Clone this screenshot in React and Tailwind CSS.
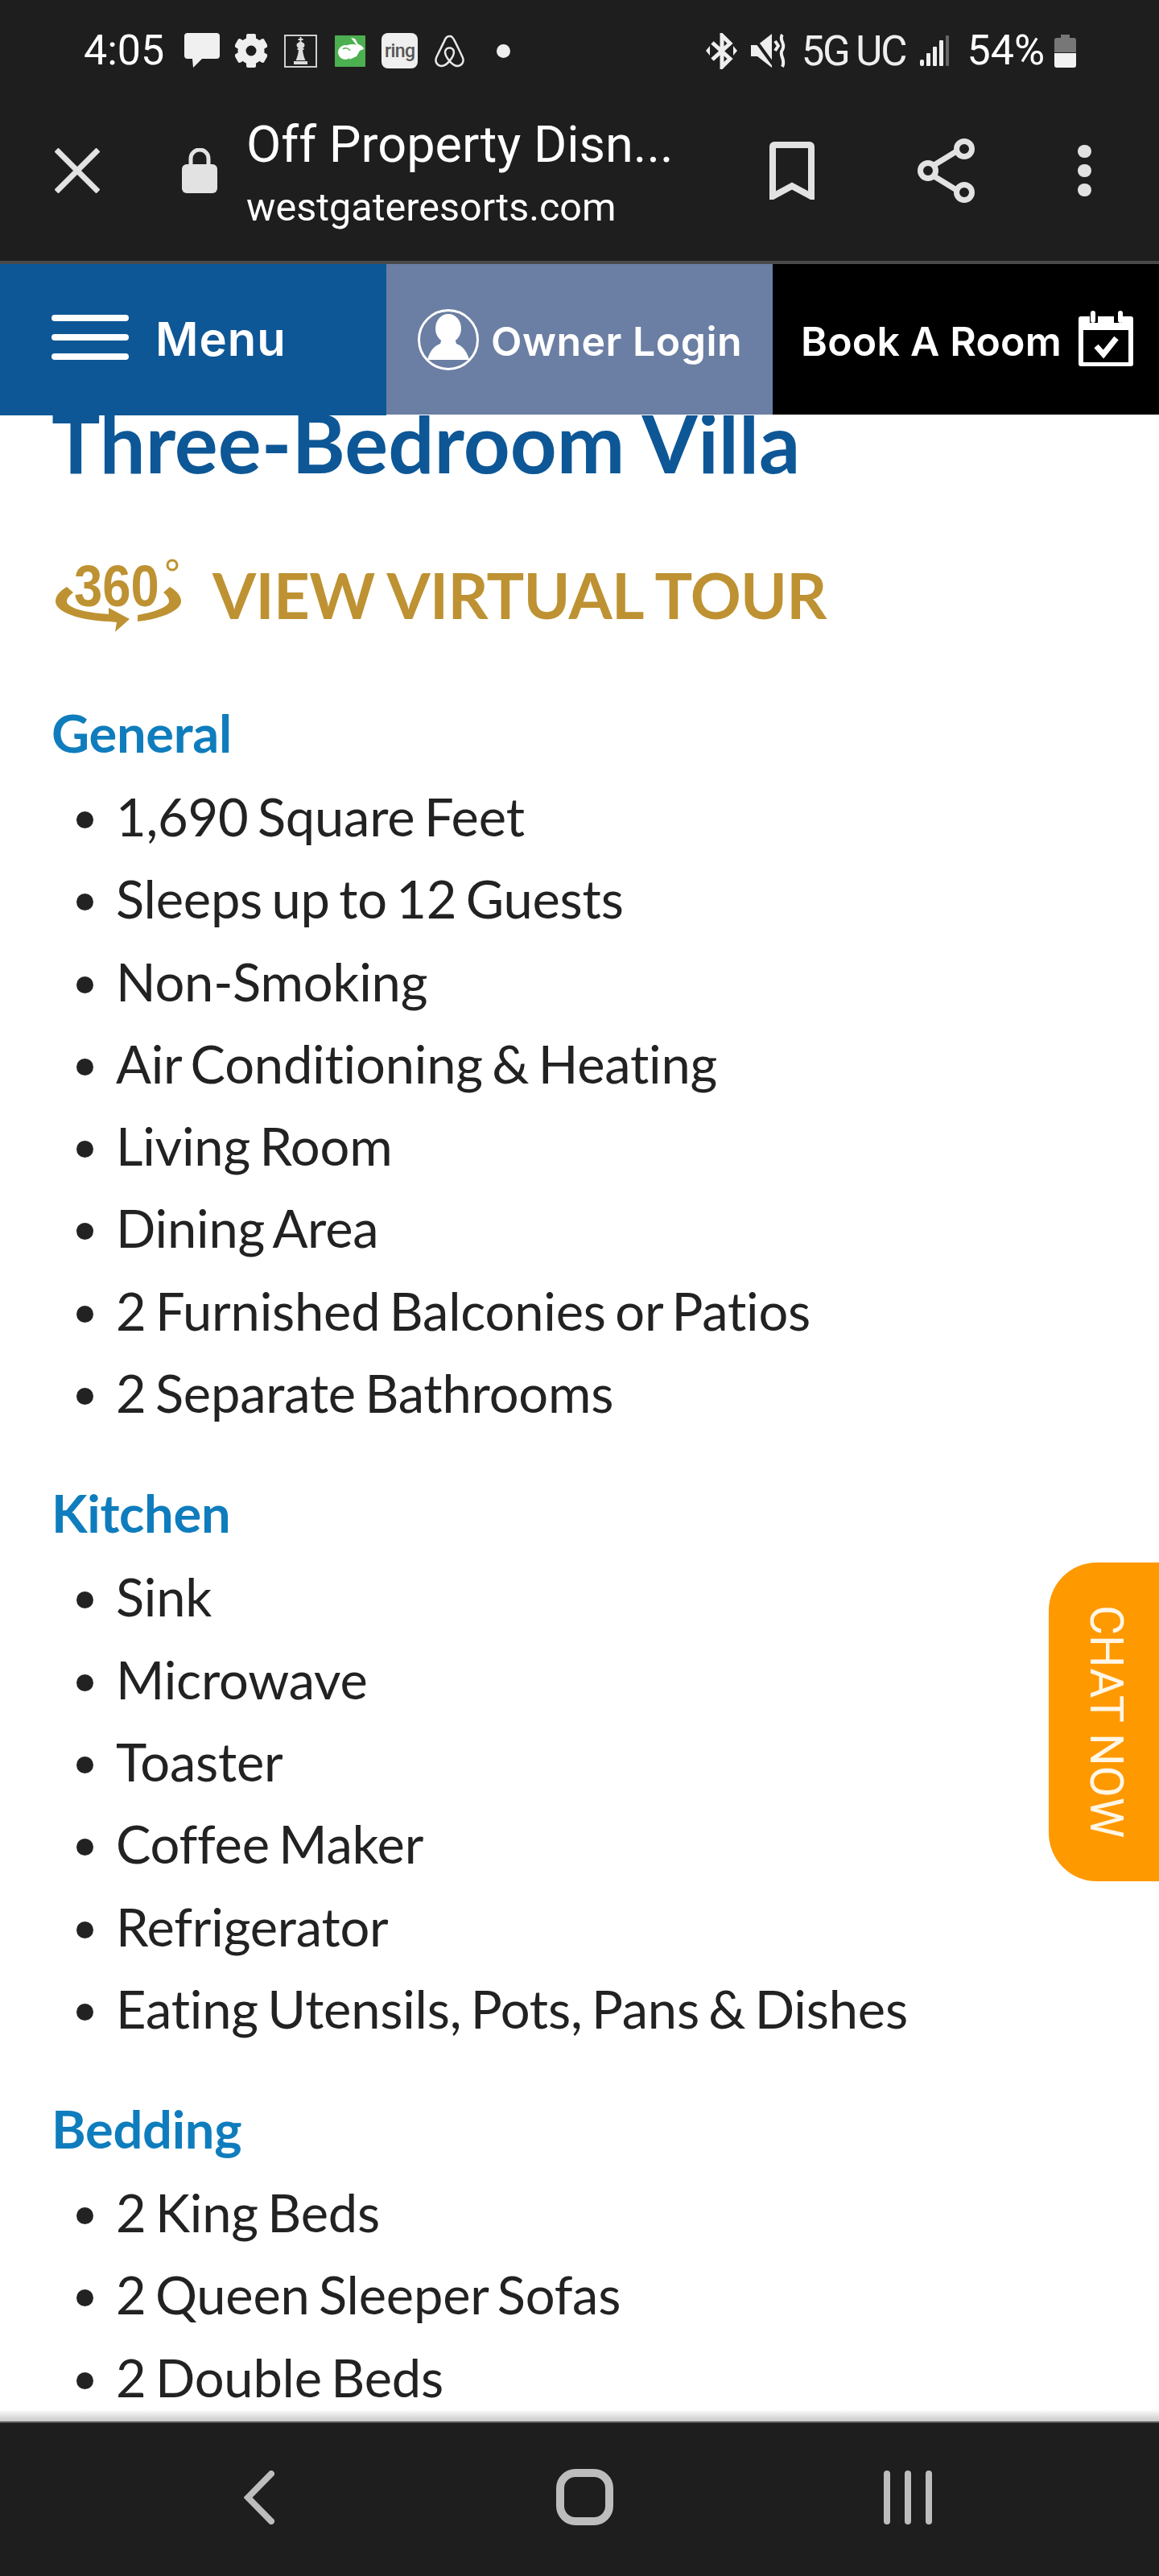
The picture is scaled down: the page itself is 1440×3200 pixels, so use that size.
import React from "react";
import { FaAirbnb } from "react-icons/fa";

const sections = [
  {
    title: "General",
    items: [
      "1,690 Square Feet",
      "Sleeps up to 12 Guests",
      "Non-Smoking",
      "Air Conditioning & Heating",
      "Living Room",
      "Dining Area",
      "2 Furnished Balconies or Patios",
      "2 Separate Bathrooms",
    ],
  },
  {
    title: "Kitchen",
    items: ["Sink", "Microwave", "Toaster", "Coffee Maker", "Refrigerator", "Eating Utensils, Pots, Pans & Dishes"],
  },
  {
    title: "Bedding",
    items: ["2 King Beds", "2 Queen Sleeper Sofas", "2 Double Beds"],
  },
];

function Gear() {
  return (
    <svg className="w-[40px] h-[42px]" viewBox="0 0 40 42" fill="#efefef">
      {[0, 60, 120, 180, 240, 300].map((a) => (
        <rect key={a} x="14" y="0" width="12" height="10" rx="2" transform={`rotate(${a} 20 21)`} />
      ))}
      <circle cx="20" cy="21" r="11.5" fill="none" stroke="#efefef" strokeWidth="10" />
    </svg>
  );
}

function StatusLeft() {
  return (
    <div className="flex items-center">
      <span className="text-[52px] leading-none text-white">4:05</span>
      <svg className="w-[44px] h-[44px] ml-[25px]" viewBox="0 0 44 44" fill="#f0f0f0">
        <path d="M4 0H40A4 4 0 0 1 44 4V28A4 4 0 0 1 40 32H22L11 43L10 32H4A4 4 0 0 1 0 28V4A4 4 0 0 1 4 0Z" />
      </svg>
      <div className="ml-[19px]">
        <Gear />
      </div>
      <svg className="ml-[21px] w-[41px] h-[41px]" viewBox="0 0 41 41" fill="#ddd">
        <rect x="1" y="1" width="39" height="39" fill="none" stroke="#cfcfcf" strokeWidth="2" />
        <path d="M19.5 3H21.5V5H23.5V7H21.5V9C24 10 25.5 11 25.5 13C25.5 15 24 16 23 17H24.5V19H23C23.5 24 25 29 26.5 32H14.5C16 29 17.5 24 18 19H16.5V17H18C17 16 15.5 15 15.5 13C15.5 11 17 10 19.5 9V7H17.5V5H19.5Z" />
        <rect x="12" y="33" width="17" height="4" />
      </svg>
      <svg className="w-[38px] h-[39px] ml-[22px]" viewBox="0 0 38 39">
        <rect width="38" height="39" rx="1" fill="#4caf50" />
        <circle cx="13" cy="21" r="9" fill="#fff" />
        <path d="M13 14C18 10 24 11 27 12L20 3L25 4L29 11C33 12 36 15 36 17L31 19L27 26L18 30L20 24L15 13Z" fill="#fff" />
        <path d="M10 17A6 6 0 0 1 19 19" fill="none" stroke="#4caf50" strokeWidth="1.5" />
      </svg>
      <div className="ml-[20px] w-[45px] h-[44px] rounded-[8px] bg-[#efefef] flex items-center justify-center text-[23px] leading-none text-[#555] font-medium tracking-tight">
        ring
      </div>
      <FaAirbnb className="ml-[18px] w-[43px] h-[45px] text-[#e8e8e8]" />
      <div className="ml-[37px] w-[17px] h-[17px] rounded-full bg-[#eee]" />
    </div>
  );
}

function StatusRight() {
  return (
    <div className="flex items-center">
      <svg className="w-[39px] h-[45px]" viewBox="0 0 39 45" fill="none" stroke="#eee" strokeWidth="5">
        <path d="M8 12L30 32L20 42V3L30 13L8 33" />
        <path d="M0 22L5 16V28Z M39 22L34 16V28Z" fill="#eee" stroke="none" />
      </svg>
      <svg className="w-[44px] h-[42px] ml-[17px]" viewBox="0 0 44 42">
        <path d="M0 14H8L26 0V42L8 28H0Z" fill="#eee" />
        <path d="M2 3L29 40" stroke="#1e1e1e" strokeWidth="4" />
        <path d="M39 1C34 8 44 12 39 20C34 26 44 32 39 41" fill="none" stroke="#eee" strokeWidth="4" />
        <path d="M30 9L34 15L30 21" fill="none" stroke="#eee" strokeWidth="4" />
      </svg>
      <span className="ml-[19px] text-[51px] leading-none text-[#eee] tracking-[-2.5px]">5G</span>
      <span className="ml-[9px] text-[51px] leading-none text-[#eee] tracking-[-2px]">UC</span>
      <svg className="w-[36px] h-[38px] ml-[18px]" viewBox="0 0 36 38">
        <rect x="0" y="30" width="5" height="8" rx="2" fill="#eee" />
        <rect x="8" y="22" width="5" height="16" rx="1" fill="#eee" />
        <rect x="16" y="14" width="5" height="24" rx="1" fill="#eee" />
        <rect x="24" y="6" width="5" height="32" rx="1" fill="#eee" />
        <rect x="32" y="0" width="4" height="38" rx="1" fill="#666" />
      </svg>
      <span className="ml-[22px] text-[52px] leading-none text-white">54%</span>
      <svg className="w-[27px] h-[41px] ml-[12px]" viewBox="0 0 27 41">
        <path d="M8 0H19V4H24A3 3 0 0 1 27 7V22H0V7A3 3 0 0 1 3 4H8Z" fill="#777" />
        <path d="M0 23H27V38A3 3 0 0 1 24 41H3A3 3 0 0 1 0 38Z" fill="#f2f2f2" />
      </svg>
    </div>
  );
}

function BrowserBar() {
  return (
    <div className="h-[198px] pb-[26px] flex items-center">
      <svg className="w-[56px] h-[56px] ml-[68px]" viewBox="0 0 56 56" stroke="#e2e2e2" strokeWidth="7">
        <path d="M2 2L54 54M54 2L2 54" />
      </svg>
      <svg className="w-[44px] h-[56px] ml-[102px]" viewBox="0 0 44 56">
        <path d="M11 22V13A11 11 0 0 1 33 13V22" fill="none" stroke="#e2e2e2" strokeWidth="5" />
        <rect y="20" width="44" height="36" rx="6" fill="#e2e2e2" />
      </svg>
      <div className="ml-[36px] w-[650px] pt-[12px] text-white">
        <div className="text-[63px] leading-[72px] whitespace-nowrap">Off Property Disn...</div>
        <div className="mt-[8px] text-[48.5px] leading-[68px] whitespace-nowrap">westgateresorts.com</div>
      </div>
      <svg className="w-[56px] h-[72px]" viewBox="0 0 56 72" fill="none" stroke="#e2e2e2" strokeWidth="8">
        <path d="M4 68V6A2 2 0 0 1 6 4H50A2 2 0 0 1 52 6V68L28 55Z" />
      </svg>
      <svg className="w-[72px] h-[80px] ml-[128px]" viewBox="0 0 72 80" fill="none" stroke="#e2e2e2" strokeWidth="7">
        <path d="M19 34L50 15M19 46L50 65" />
        <circle cx="13" cy="40" r="9.5" />
        <circle cx="58" cy="13" r="9.5" />
        <circle cx="58" cy="67" r="9.5" />
      </svg>
      <div className="ml-[127px] flex flex-col gap-[8px]">
        <div className="w-[17px] h-[16px] rounded-full bg-[#e2e2e2]" />
        <div className="w-[17px] h-[16px] rounded-full bg-[#e2e2e2]" />
        <div className="w-[17px] h-[16px] rounded-full bg-[#e2e2e2]" />
      </div>
    </div>
  );
}

function SiteHeader() {
  return (
    <div className="relative z-10 grid grid-cols-3 h-[188px] font-['Inter',sans-serif] text-white">
      <div className="bg-[#0d5796] flex items-center pl-[64px] pb-[6px]">
        <svg className="w-[96px] h-[56px]" viewBox="0 0 96 56" fill="#fff">
          <rect width="96" height="8" rx="4" />
          <rect y="24" width="96" height="8" rx="4" />
          <rect y="48" width="96" height="8" rx="4" />
        </svg>
        <span className="ml-[33px] text-[58px] leading-none font-semibold tracking-[1px] pt-[4px]">Menu</span>
      </div>
      <div className="bg-[#6b7ea3] h-[187px] flex items-center pl-[39px]">
        <svg className="w-[76px] h-[76px]" viewBox="0 0 76 76">
          <circle cx="38" cy="38" r="36.5" fill="none" stroke="#fff" strokeWidth="3" />
          <ellipse cx="38" cy="24" rx="16" ry="18" fill="#fff" />
          <path d="M30 36H46L48 43C56 46 61 52 64 63H12C15 52 20 46 28 43Z" fill="#fff" />
        </svg>
        <span className="ml-[15px] text-[50px] leading-none font-semibold tracking-[0.5px] whitespace-nowrap pt-[4px]">Owner Login</span>
      </div>
      <div className="bg-black h-[187px] flex items-center pl-[35px]">
        <span className="text-[50px] leading-none font-semibold tracking-[0.2px] whitespace-nowrap pt-[4px]">Book A Room</span>
        <svg className="w-[68px] h-[72px] ml-[21px]" viewBox="0 0 68 72">
          <path d="M3 7H14V15H24V7H44V15H54V7H65A3 3 0 0 1 68 10V66A3 3 0 0 1 65 69H3A3 3 0 0 1 0 66V10A3 3 0 0 1 3 7Z" fill="#fff" />
          <rect x="6" y="24" width="56" height="40" fill="#000" />
          <rect x="15" y="0" width="6" height="15" rx="3" fill="#fff" />
          <rect x="49" y="0" width="6" height="15" rx="3" fill="#fff" />
          <path d="M22 44L31 54L47 34" fill="none" stroke="#fff" strokeWidth="7" />
        </svg>
      </div>
    </div>
  );
}

function Logo360() {
  return (
    <svg className="w-[156px] h-[92px]" viewBox="0 0 156 92" fill="#be9232">
      <text transform="translate(23 60) scale(0.88 1)" fontFamily="Liberation Sans, sans-serif" fontWeight="700" fontSize="72">
        360
      </text>
      <circle cx="145" cy="9" r="6" fill="none" stroke="#be9232" strokeWidth="3" />
      <path d="M14 36C4 42 0 48 0 54C0 68 32 78 66 79V70C36 68 14 62 14 54C14 50 18 46 22 43Z" />
      <path d="M66 62L92 76L74 92L76 80L66 79Z" />
      <path d="M142 36C152 42 156 48 156 54C156 66 130 76 102 79V71C126 67 141 60 141 54C141 50 138 46 134 43Z" />
    </svg>
  );
}

export default function App() {
  return (
    <div className="relative w-[1440px] h-[3200px] overflow-hidden flex flex-col bg-white font-['Roboto',sans-serif]">
      <div className="bg-[#1e1e1e] border-b-4 border-[#4a4a4a]">
        <div className="h-[126px] flex items-center justify-between pl-[104px] pr-[103px]">
          <StatusLeft />
          <StatusRight />
        </div>
        <BrowserBar />
      </div>

      <SiteHeader />

      <main className="flex-1 overflow-hidden px-[64px] font-['Lato',sans-serif]">
        <h1 className="-mt-[22px] text-[101px] leading-[110px] font-bold text-[#0d5796] whitespace-nowrap">Three-Bedroom Villa</h1>
        <div className="mt-[89px] flex items-center pl-[5px]">
          <Logo360 />
          <span className="ml-[39px] text-[78px] leading-[92px] font-bold tracking-[-0.65px] text-[#be9232]">VIEW VIRTUAL TOUR</span>
        </div>
        {sections.map((s) => (
          <section key={s.title} className="first-of-type:mt-[72px] mt-[45px]">
            <h2 className="text-[65px] leading-[106px] tracking-[-0.3px] font-bold text-[#0f7dbd]">{s.title}</h2>
            <ul className="list-disc pl-[80px] text-[65px] leading-[102.3px] tracking-[-0.2px] [word-spacing:-5px] text-[#222]">
              {s.items.map((item) => (
                <li key={item}>{item}</li>
              ))}
            </ul>
          </section>
        ))}
      </main>

      <div className="absolute right-0 top-[1941px] w-[137px] h-[396px] rounded-l-[60px] bg-[#ff9900] flex items-center justify-center font-['Roboto',sans-serif] text-[#fff6e6] text-[57px] [writing-mode:vertical-rl] pl-[5px]">
        CHAT NOW
      </div>

      <div className="absolute left-0 right-0 bottom-[192px] h-[15px] bg-gradient-to-b from-white to-[#c8c8c8]" />
      <div className="relative h-[192px] bg-[#1e1e1e] border-t-2 border-[#555] flex items-center">
        <svg className="absolute left-[303px] top-[59px] w-[38px] h-[67px]" viewBox="0 0 38 67" fill="none" stroke="#bdbdbd" strokeWidth="8" strokeLinecap="round">
          <path d="M34 4L5 33.5L34 63" />
        </svg>
        <div className="absolute left-[691px] top-[57px] w-[71px] h-[70px] rounded-[24px] border-[10px] border-[#bdbdbd]" />
        <div className="absolute left-[1098px] top-[59px] flex gap-[18px]">
          <div className="w-[8px] h-[67px] rounded-full bg-[#bdbdbd]" />
          <div className="w-[8px] h-[67px] rounded-full bg-[#bdbdbd]" />
          <div className="w-[8px] h-[67px] rounded-full bg-[#bdbdbd]" />
        </div>
      </div>
    </div>
  );
}
